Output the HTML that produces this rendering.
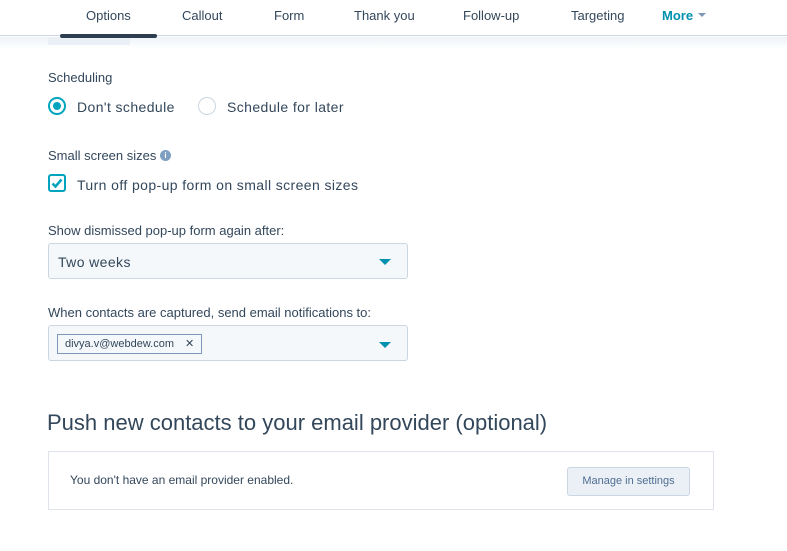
<!DOCTYPE html>
<html><head><style>
*{box-sizing:border-box;margin:0;padding:0}
body{width:787px;height:551px;background:#fff;font-family:"Liberation Sans",sans-serif;color:#33475b;position:relative;overflow:hidden}
.a{position:absolute;white-space:nowrap}
.tab{position:absolute;top:8px;font-size:13px;color:#33475b}
.lbl{font-size:13px;color:#33475b}
.big{font-size:14px;color:#33475b;letter-spacing:.4px}
.sel{position:absolute;left:48px;width:360px;height:36px;background:#f5f8fa;border:1px solid #cbd6e2;border-radius:3px}
.car{position:absolute;right:16px;top:15px;width:0;height:0;border-left:6px solid transparent;border-right:6px solid transparent;border-top:6px solid #0091ae}
</style></head><body>
<div class="a" style="left:0;top:0;width:787px;height:36px;border-bottom:1px solid #cbd6e2"></div>
<div class="a" style="left:0;top:37px;width:787px;height:12px;background:linear-gradient(#eef3f7,#fff)"></div>
<div class="a" style="left:48px;top:37px;width:82px;height:8px;background:#eaf0f6"></div>
<div class="a" style="left:60px;top:34px;width:97px;height:4px;background:#2d3e50;border-radius:2px"></div>
<div class="tab" style="left:86px">Options</div>
<div class="tab" style="left:182px">Callout</div>
<div class="tab" style="left:274px">Form</div>
<div class="tab" style="left:354px">Thank you</div>
<div class="tab" style="left:463px">Follow-up</div>
<div class="tab" style="left:571px">Targeting</div>
<div class="tab" style="left:662px;color:#0091ae;font-weight:bold">More</div>
<div class="a" style="left:698px;top:13px;border-left:4px solid transparent;border-right:4px solid transparent;border-top:4px solid #7c98b6"></div>

<div class="a lbl" style="left:48px;top:70px">Scheduling</div>
<div class="a" style="left:48px;top:97px;width:18px;height:18px;border-radius:50%;border:2px solid #00a4bd;background:#fff"></div>
<div class="a" style="left:53px;top:102px;width:8px;height:8px;border-radius:50%;background:#00a4bd"></div>
<div class="a big" style="left:77px;top:99px">Don't schedule</div>
<div class="a" style="left:198px;top:97px;width:18px;height:18px;border-radius:50%;border:1px solid #cbd6e2"></div>
<div class="a big" style="left:227px;top:99px">Schedule for later</div>

<div class="a lbl" style="left:48px;top:148px">Small screen sizes</div>
<div class="a" style="left:160px;top:150px;width:11px;height:11px;border-radius:50%;background:#7fa0c0;color:#fff;font-size:8px;font-weight:bold;text-align:center;line-height:11px">i</div>
<div class="a" style="left:48px;top:174px;width:18px;height:18px;border:2px solid #00a4bd;border-radius:3px"></div>
<svg class="a" style="left:48px;top:174px" width="18" height="18"><path d="M4.5 9.5l3 3 6-7" stroke="#00a4bd" stroke-width="2.5" fill="none"/></svg>
<div class="a big" style="left:77px;top:177px">Turn off pop-up form on small screen sizes</div>

<div class="a lbl" style="left:48px;top:223px">Show dismissed pop-up form again after:</div>
<div class="sel" style="top:243px"><div class="a big" style="left:9px;top:10px">Two weeks</div><div class="car"></div></div>

<div class="a lbl" style="left:48px;top:305px">When contacts are captured, send email notifications to:</div>
<div class="sel" style="top:325px"><div class="a" style="left:8px;top:8px;height:20px;width:145px;border:1px solid #7c98b6;background:#f5f8fa;font-size:11px;line-height:18px;padding-left:7px;color:#33475b">divya.v@webdew.com <span style="margin-left:8px">✕</span></div><div class="car" style="top:16px"></div></div>

<div class="a" style="left:47px;top:410px;font-size:22px;color:#33475b;font-weight:300">Push new contacts to your email provider (optional)</div>
<div class="a" style="left:48px;top:451px;width:666px;height:59px;border:1px solid #dfe3eb"></div>
<div class="a" style="left:70px;top:473px;font-size:12px;color:#33475b">You don't have an email provider enabled.</div>
<div class="a" style="left:567px;top:467px;width:123px;height:29px;background:#eaf0f6;border:1px solid #cbd6e2;border-radius:3px;font-size:11px;color:#506e91;text-align:center;line-height:27px">Manage in settings</div>
</body></html>
